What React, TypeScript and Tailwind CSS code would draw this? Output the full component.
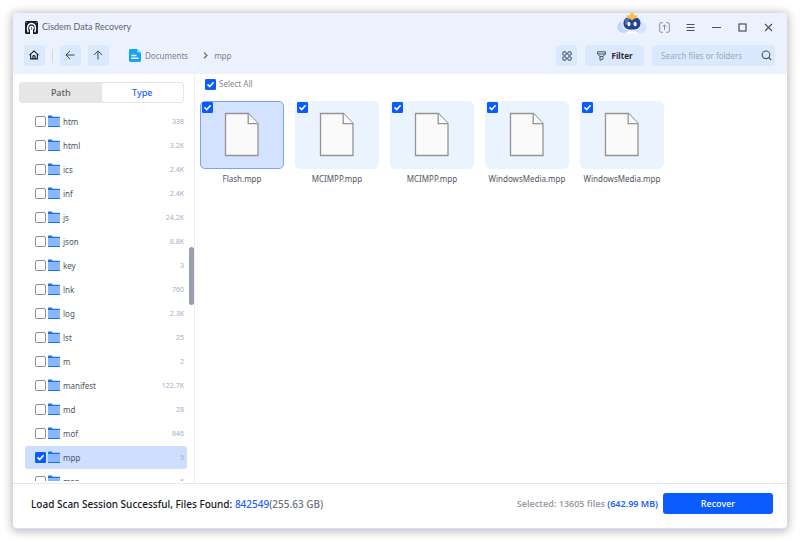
import type { ReactNode } from "react";

const types: [string, string][] = [
  ["htm", "338"],
  ["html", "3.2K"],
  ["ics", "2.4K"],
  ["inf", "2.4K"],
  ["js", "24.2K"],
  ["json", "8.8K"],
  ["key", "3"],
  ["lnk", "760"],
  ["log", "2.3K"],
  ["lst", "25"],
  ["m", "2"],
  ["manifest", "122.7K"],
  ["md", "28"],
  ["mof", "846"],
  ["mpp", "5"],
  ["msg", "6"],
];

const files = ["Flash.mpp", "MCIMPP.mpp", "MCIMPP.mpp", "WindowsMedia.mpp", "WindowsMedia.mpp"];

function Check({ label, checked = false, id }: { label?: string; checked?: boolean; id?: string }) {
  return (
    <span className="relative block size-[11px] shrink-0">
      <input
        id={id}
        type="checkbox"
        defaultChecked={checked}
        aria-label={label}
        className="peer block size-[11px] appearance-none rounded-[2px] border border-[#8f9094] bg-white checked:rounded-[1px] checked:border-[#0a5cff] checked:bg-[#0a5cff]"
      />
      <svg viewBox="0 0 11 11" className="pointer-events-none absolute inset-0 hidden size-[11px] peer-checked:block" fill="none" stroke="#fff" strokeWidth="1.6">
        <path d="M2.5 5.4 4.7 7.5 8.6 3.2" />
      </svg>
    </span>
  );
}

function Folder() {
  return (
    <svg viewBox="0 0 12 13" className="h-[13px] w-3 shrink-0">
      <path d="M0 1.4Q0 .6.8.6H3.6L4.8 1.8H11.2Q12 1.8 12 2.6V12H0Z" fill="#1672ec" />
      <path d="M0 3H12V11H0Z" fill="#8ab6fb" />
    </svg>
  );
}

function DocumentShape() {
  return (
    <svg viewBox="0 0 36 45" className="-mt-0.5 h-[45px] w-9" fill="#fafafa" stroke="#969394" strokeWidth="1.3">
      <path d="M1.5 1.5H24.5L34 11.5V43.5H1.5Z" />
      <path d="M24.2 1.5V11.6H34" />
    </svg>
  );
}

function Tool({ label, children }: { label: string; children: ReactNode }) {
  return (
    <button aria-label={label} className="flex size-[21px] shrink-0 items-center justify-center rounded-[3px] bg-[#dbe9ff] text-[#3c4257]">
      {children}
    </button>
  );
}

function Logo() {
  return (
    <svg viewBox="0 0 13 13" className="size-[13px]">
      <rect width="13" height="13" rx="1.5" fill="#161c38" />
      <path d="M3.2 11.2C1.6 7.4 2.6 2.4 6.5 2.4S11.4 7.4 9.8 11.2" fill="none" stroke="#fff" strokeWidth="1.5" />
      <path d="M5 13V8.8Q3.8 8 4.2 6.2 4.9 4.6 6.5 4.6T8.8 6.2Q9.2 8 8 8.8V13Z" fill="#fff" />
      <path d="M6.5 5.8V9" stroke="#5c6580" strokeWidth=".8" />
      <path d="M1 1.6H2.2M10.8 1.6H12" stroke="#9aa4c0" strokeWidth=".8" />
    </svg>
  );
}

function Robot() {
  return (
    <svg viewBox="0 0 30 22" className="h-[22px] w-[30px]">
      <ellipse cx="6.5" cy="15" rx="6.3" ry="6" fill="#c3d6ff" />
      <ellipse cx="23.5" cy="15.5" rx="6" ry="5.5" fill="#d9e3fd" />
      <ellipse cx="15" cy="11.5" rx="10.5" ry="9" fill="#dbe7ff" />
      <rect x="6.5" y="5" width="17" height="12.5" rx="6" fill="#25428f" />
      <path d="M8 8.5Q10 5.5 14 5.3L9 13.5Q7.5 12 8 8.5Z" fill="#4f72bd" />
      <rect x="10.4" y="9.8" width="3" height="4.4" rx="1.5" fill="#e7f5ff" />
      <rect x="16.6" y="9.8" width="3" height="4.4" rx="1.5" fill="#e7f5ff" />
      <path d="M13.2 1H16.8V3.3H20V6L17.4 6.5 15 8.5 12.6 6.5 10 6V3.3H13.2Z" fill="#fcbf45" />
      <path d="M11 19.3Q15 17.8 19 19.3L20 22H10Z" fill="#f7faff" />
    </svg>
  );
}

function TitleBar() {
  return (
    <div className="flex h-7 items-center justify-between pr-[13px] pl-3">
      <div className="flex items-center gap-1 font-['Lato','Noto_Sans',sans-serif] text-[9px] leading-[14px] text-[#5f6470]">
        <Logo />
        <span>Cisdem Data Recovery</span>
      </div>
      <div className="flex items-center text-[#4a4f63]">
        <button aria-label="Assistant" className="mr-3 -mt-2"><Robot /></button>
        <button aria-label="Export" className="mr-4">
          <svg viewBox="0 0 11 11" className="size-[11px]" fill="none" stroke="#8b90a0" strokeWidth="1">
            <path d="M3.8.7H2Q.7.7.7 2V9Q.7 10.3 2 10.3H3.8M7.2.7H9Q10.3.7 10.3 2V9Q10.3 10.3 9 10.3H7.2M5.5 8.2V3.2M3.6 4.6 5.5 3 7.4 4.6" />
          </svg>
        </button>
        <button aria-label="Menu" className="mr-[17px]">
          <svg viewBox="0 0 9 9" className="size-[9px]" stroke="currentColor"><path d="M.5 1.5H8.5M.5 4.5H8.5M.5 7.5H8.5" /></svg>
        </button>
        <button aria-label="Minimize" className="mr-[17px]">
          <svg viewBox="0 0 9 9" className="size-[9px]" stroke="currentColor"><path d="M0 4.5H9" /></svg>
        </button>
        <button aria-label="Maximize" className="mr-[17px]">
          <svg viewBox="0 0 9 9" className="size-[9px]" fill="none" stroke="currentColor" strokeWidth="1.2"><rect x="1" y="1" width="7" height="7" /></svg>
        </button>
        <button aria-label="Close" className="mr-[1px]">
          <svg viewBox="0 0 9 9" className="size-[9px]" stroke="currentColor" strokeWidth="1.1"><path d="M1 1 8 8M8 1 1 8" /></svg>
        </button>
      </div>
    </div>
  );
}

function Toolbar() {
  return (
    <div className="flex h-[33px] items-start justify-between pt-1 pr-3 pl-[11px]">
      <div className="flex items-center">
        <Tool label="Home">
          <svg viewBox="0 0 11 11" className="-mt-px -ml-px size-[10px]" fill="none" stroke="#15171f" strokeWidth="1.2">
            <path d="M.6 5.6 5.5 1 10.4 5.6M1.8 4.8V9.8H9.2V4.8M4.3 9.6V7.2Q4.3 6.2 5.5 6.2T6.7 7.2V9.6" />
          </svg>
        </Tool>
        <span className="mx-[7px] h-[14px] w-px bg-[#d3d9e4]" />
        <Tool label="Back">
          <svg viewBox="0 0 11 11" className="-mt-px -ml-px size-[10px]" fill="none" stroke="currentColor" strokeWidth="1.1"><path d="M10.4 5.5H1M5.4 1.1 1 5.5 5.4 9.9" /></svg>
        </Tool>
        <span className="w-[7px]" />
        <Tool label="Up">
          <svg viewBox="0 0 11 11" className="-mt-px -ml-px size-[10px]" fill="none" stroke="currentColor" strokeWidth="1.1"><path d="M5.5 10.4V1M1.1 5.4 5.5 1 9.9 5.4" /></svg>
        </Tool>
        <nav className="ml-5 flex items-center text-[8px] leading-3 text-[#7d828f]">
          <svg viewBox="0 0 12 13" className="mr-1 h-[13px] w-3">
            <path d="M0 1.4Q0 0 1.4 0H8.2L12 3.8V11.6Q12 13 10.6 13H1.4Q0 13 0 11.6Z" fill="#18a4f5" />
            <path d="M8.2 0 12 3.8H9.2Q8.2 3.8 8.2 2.8Z" fill="#8fd5fb" />
            <path d="M2.4 6.5H7.4M2.4 9.2H9.6" stroke="#fff" strokeWidth="1.4" />
          </svg>
          <a href="#documents">Documents</a>
          <svg viewBox="0 0 5 7" className="mr-1.5 ml-[15px] h-[7px] w-[5px]" fill="none" stroke="#555a69" strokeWidth="1.1"><path d="M1 .6 4 3.5 1 6.4" /></svg>
          <a href="#mpp">mpp</a>
        </nav>
      </div>
      <div className="flex items-center gap-2">
        <Tool label="Grid view">
          <svg viewBox="0 0 10 10" className="size-[10px]" fill="none" stroke="currentColor">
            <rect x=".8" y=".8" width="3.4" height="3.4" rx="1" /><rect x="5.8" y=".8" width="3.4" height="3.4" rx="1" />
            <rect x=".8" y="5.8" width="3.4" height="3.4" rx="1" /><rect x="5.8" y="5.8" width="3.4" height="3.4" rx="1" />
          </svg>
        </Tool>
        <button className="flex h-[21px] w-[59px] items-center justify-center gap-1.5 rounded-[3px] bg-[#dbe9ff] text-[8px] font-bold text-[#23262f]">
          <svg viewBox="0 0 9 10" className="h-[10px] w-[9px]" fill="none" stroke="#4a5063"><path d="M.6.8H8.4V3L6 5.4V8L3 9.3V5.4L.6 3ZM.6 3H8.4M3 5.4H6" /></svg>
          Filter
        </button>
        <label className="flex h-[21px] w-[123px] items-center rounded-[3px] bg-[#dbe9ff] pr-[3px] pl-[9px]">
          <input type="search" aria-label="Search" placeholder="Search files or folders" className="h-4 min-w-0 flex-1 bg-transparent text-[8px] outline-none placeholder:text-[#9ca8bd]" />
          <svg viewBox="0 0 11 11" className="size-[11px] shrink-0" fill="none" stroke="#4a5063" strokeWidth="1.1"><circle cx="5" cy="4.8" r="3.8" /><path d="M7.7 7.5 10.2 10" /></svg>
        </label>
      </div>
    </div>
  );
}

function Sidebar() {
  return (
    <aside className="flex w-[182px] shrink-0 flex-col border-r border-[#ececf1] pt-2 pl-1.5">
      <div className="mr-[10px] flex h-[21px] shrink-0 rounded-[4px] bg-[#e6e6e6] p-px text-[9px] font-medium">
        <button className="flex-1 text-[#5c5e66]">Path</button>
        <button className="flex-1 rounded-[3px] bg-white text-[#1a5fff]">Type</button>
      </div>
      <div className="mt-[7px] mb-0.5 flex min-h-0 flex-1">
        <ul className="mr-[2px] ml-1.5 flex-1 overflow-hidden">
          {types.map(([name, count]) => (
            <li key={name} className="h-6">
              <label className={`flex h-[23px] items-center rounded-[3px] pr-[3px] pl-[10px] text-[8px] ${name === "mpp" ? "bg-[#cddefe]" : ""}`}>
                <Check checked={name === "mpp"} />
                <span className="ml-0.5"><Folder /></span>
                <span className="ml-[3px] flex-1 leading-3 text-[#50545e]">{name}</span>
                <span className="text-[7px] leading-3 text-[#a0aeca]">{count}</span>
              </label>
            </li>
          ))}
        </ul>
        <div className="mt-[137px] h-[58px] w-[5px] rounded-full bg-[#9a9fad]" />
      </div>
    </aside>
  );
}

function FileGrid() {
  return (
    <main className="min-w-0 flex-1 overflow-hidden pt-1 pl-[5px]">
      <label htmlFor="select-all" className="flex h-3 items-center gap-[3px] pl-[5px] text-[8px] leading-3 text-[#868993]">
        <Check id="select-all" checked />
        Select All
      </label>
      <ul className="mt-[11px] flex flex-wrap gap-[11px]">
        {files.map((name, i) => (
          <li key={i} className="w-[84px]">
            <div className={`relative flex h-[68px] items-center justify-center rounded-[5px] border ${i === 0 ? "border-[#7ba0f8] bg-[#d3e3ff]" : "border-[#ebf3ff] bg-[#ebf3ff]"}`}>
              <span className="absolute top-0 left-px"><Check label={`Select ${name}`} checked /></span>
              <DocumentShape />
            </div>
            <p className="mt-1 text-center text-[8px] leading-3 whitespace-nowrap text-[#50545e]">{name}</p>
          </li>
        ))}
      </ul>
    </main>
  );
}

export default function App() {
  return (
    <div className="flex h-screen bg-white px-[13px] pt-[13px] pb-[13px] font-['Noto_Sans','Open_Sans',sans-serif]">
      <div className="flex min-w-0 flex-1 flex-col overflow-hidden rounded-[4px] border-b border-[#d3e1fd] bg-white shadow-[0_1px_9px_2px_rgba(0,0,0,0.25)]">
        <header className="shrink-0 bg-[#ebf2fe]">
          <TitleBar />
          <Toolbar />
        </header>
        <div className="flex min-h-0 flex-1">
          <Sidebar />
          <FileGrid />
        </div>
        <footer className="flex h-[45px] shrink-0 items-center justify-between border-t border-[#e6eaf0] pr-[14px] pb-[5px] pl-[18px]">
          <p className="text-[10px] leading-[14px] font-medium text-[#15171c]">
            Load Scan Session Successful, Files Found: <span className="text-[#1a5fff]">842549</span>
            <span className="text-[#6d717b]">(255.63 GB)</span>
          </p>
          <div className="flex items-center gap-[5px]">
            <p className="text-[9px] leading-3 font-semibold text-[#9a9da5]">
              Selected: 13605 files <span className="text-[#1a5fff]">(642.99 MB)</span>
            </p>
            <button className="h-[21px] w-[110px] rounded-[3px] bg-[#0a5cff] text-[9px] font-medium text-white">Recover</button>
          </div>
        </footer>
      </div>
    </div>
  );
}
